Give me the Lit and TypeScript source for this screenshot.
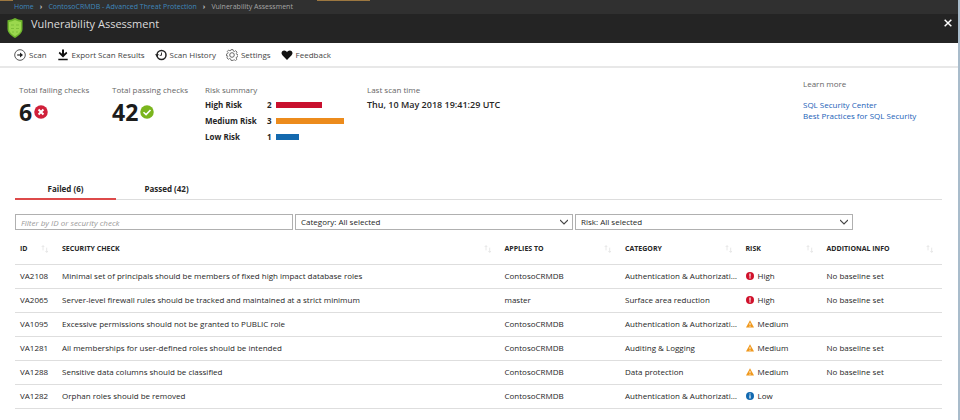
import { LitElement, html, svg, css } from "lit";
import { customElement, state } from "lit/decorators.js";

type Risk = "High" | "Medium" | "Low";

interface Check {
  id: string;
  title: string;
  target: string;
  category: string;
  risk: Risk;
  info: string;
}

const CHECKS: Check[] = [
  { id: "VA2108", title: "Minimal set of principals should be members of fixed high impact database roles", target: "ContosoCRMDB", category: "Authentication & Authorization", risk: "High", info: "No baseline set" },
  { id: "VA2065", title: "Server-level firewall rules should be tracked and maintained at a strict minimum", target: "master", category: "Surface area reduction", risk: "High", info: "No baseline set" },
  { id: "VA1095", title: "Excessive permissions should not be granted to PUBLIC role", target: "ContosoCRMDB", category: "Authentication & Authorization", risk: "Medium", info: "" },
  { id: "VA1281", title: "All memberships for user-defined roles should be intended", target: "ContosoCRMDB", category: "Auditing & Logging", risk: "Medium", info: "No baseline set" },
  { id: "VA1288", title: "Sensitive data columns should be classified", target: "ContosoCRMDB", category: "Data protection", risk: "Medium", info: "No baseline set" },
  { id: "VA1282", title: "Orphan roles should be removed", target: "ContosoCRMDB", category: "Authentication & Authorization", risk: "Low", info: "" },
];

const SUMMARY = [
  { name: "High Risk", count: 2, cls: "high" },
  { name: "Medium Risk", count: 3, cls: "medium" },
  { name: "Low Risk", count: 1, cls: "low" },
];

const COLUMNS = ["ID", "SECURITY CHECK", "APPLIES TO", "CATEGORY", "RISK", "ADDITIONAL INFO"];

const icon = (size: number, body: unknown) =>
  html`<svg width=${size} height=${size} viewBox="0 0 12 12" fill="none" aria-hidden="true">${body}</svg>`;

const scanIcon = icon(12, svg`<circle cx="6" cy="6" r="5.3" stroke="#444" stroke-width=".9"/><path d="M3.2 6h4" stroke="#222" stroke-width="1.2"/><path d="M6 3.600L9 6 6 8.400z" fill="#222"/>`);
const exportIcon = icon(12, svg`<path d="M5 .5h2v4.200l2.400-2 .9 1.500L6 8.600 1.700 4.200l.9-1.500 2.400 2z" fill="#111"/><path d="M1.300 10.500h9.400" stroke="#111" stroke-width="1.500"/>`);
const historyIcon = icon(12, svg`<circle cx="6.500" cy="6" r="4.500" stroke="#222" stroke-width="1.500"/><path d="M6.500 3.500v2.800h-1.800" stroke="#222" stroke-width=".9"/><path d="M0 5.200h4L2 8z" fill="#222"/>`);
const settingsIcon = icon(12, svg`<path d="M5 .6h2l.4 1.500 1 .4 1.300-.8 1.400 1.400-.8 1.300.4 1 1.300.3v1.800l-1.500.5-.4 1 .8 1.300-1.400 1.300-1.200-.8-1.100.4L7 11.400H5l-.4-1.500-1-.4-1.300.8-1.400-1.400.8-1.300-.4-1L.4 7V5l1.300-.4.4-1-.8-1.200 1.400-1.400 1.200.8 1-.4z" stroke="#555" stroke-width=".8"/><circle cx="6" cy="6" r="2.300" stroke="#555" stroke-width=".9"/>`);
const heartIcon = icon(12, svg`<path d="M6 11L1.400 6.300C-.5 4.200.8 1.400 3.200 1.400 4.600 1.400 5.500 2.200 6 3.200c.5-1 1.400-1.800 2.800-1.800 2.400 0 3.700 2.800 1.800 4.900z" fill="#111"/>`);
const failIcon = icon(14, svg`<circle cx="6" cy="6" r="5.800" fill="#d0203a"/><path d="M3.900 3.900l4.200 4.200M8.100 3.900L3.900 8.100" stroke="#fff" stroke-width="1.700"/>`);
const passIcon = icon(14, svg`<circle cx="6" cy="6" r="5.800" fill="#7ab51d"/><path d="M3 6.200l2.200 2L9 4.200" stroke="#fff" stroke-width="1.300"/>`);
const sortIcon = icon(8, svg`<path d="M3 8V1M1 3l2-2 2 2M8.500 4v7M6.500 9l2 2 2-2" stroke="#dcdcdc"/>`);
const closeIcon = icon(8, svg`<path d="M1 1l10 10M11 1L1 11" stroke="#fff" stroke-width="2.200"/>`);
const chevronIcon = icon(8, svg`<path d="M0 3l6 6 6-6" stroke="#444" stroke-width="1.600"/>`);

const RISK_ICONS: Record<Risk, unknown> = {
  High: icon(8, svg`<circle cx="6" cy="6" r="6" fill="#d0112b"/><path d="M6 2.300v4.700M6 8v1.800" stroke="#fff" stroke-width="1.800"/>`),
  Medium: icon(8, svg`<path d="M6 .4L12 11.400H0z" fill="#f0981c"/><path d="M6 4.300v3.500M6 8.800v1.400" stroke="#fff" stroke-width="1.300"/>`),
  Low: icon(8, svg`<circle cx="6" cy="6" r="6" fill="#1269b0"/><path d="M6 2.200v1.700M6 5v4.700" stroke="#fff" stroke-width="1.800"/>`),
};

const COMMANDS = [
  { label: "Scan", icon: scanIcon },
  { label: "Export Scan Results", icon: exportIcon },
  { label: "Scan History", icon: historyIcon },
  { label: "Settings", icon: settingsIcon },
  { label: "Feedback", icon: heartIcon },
];

@customElement("app-root")
export class AppRoot extends LitElement {
  @state() private tab = 0;

  static styles = css`
    :host { display: block; min-height: 100vh; box-sizing: border-box; border-right: 2px solid #a9bccb; background: #fff; color: #262626; font: 8px/12px "Open Sans", "Noto Sans", sans-serif; }
    * { box-sizing: border-box; }
    button, input, select { font: inherit; color: inherit; }
    button { background: none; border: 0; padding: 0; }
    svg { display: block; flex: none; }
    a { text-decoration: none; }
    .crumbs { display: flex; gap: 6px; height: 14px; padding: 1px 14px 0; color: #a5a5a5; font-size: 7px;
      background: linear-gradient(#9c7740, #9c7740) 0 0 / 13px 1px no-repeat, linear-gradient(#9c7740, #9c7740) 317px 0 / 53px 1px no-repeat, #303030; }
    .crumbs a { color: #3f87bb; }
    .sep { font-weight: 700; color: #c4c4c4; }
    .title { display: flex; align-items: flex-start; gap: 8px; height: 29px; padding: 3px 5px 0 7px; background: #242424; color: #dcdcdc; }
    .title h1 { flex: 1; margin: 0; font-size: 11px; line-height: 14px; font-weight: 400; }
    .close { padding: 2px 1px; }
    .commands { display: flex; gap: 10px; height: 25px; padding: 0 14px; align-items: center; border-bottom: 2px solid #e8e8e8; }
    .commands button { display: flex; align-items: center; gap: 3px; color: #444; }
    .overview { display: flex; padding: 15px 42px 0 19px; height: 112px; }
    .overview h2 { margin: 0; font-size: 8px; line-height: 14px; font-weight: 400; color: #666; }
    .stat { width: 93px; }
    .num { display: flex; align-items: center; gap: 2px; font-size: 23px; line-height: 30px; font-weight: 700; color: #1c1c1c; }
    .risks { width: 162px; }
    .riskline { display: grid; grid-template-columns: 62px 9px 1fr; line-height: 16px; align-items: center; font-weight: 700; }
    .bar { height: 6px; }
    .high { background: #c8102e; }
    .medium { background: #ec8b1c; }
    .low { background: #1469ae; }
    .time { flex: 1; }
    .time p { margin: 0; font-size: 9px; line-height: 16px; font-weight: 600; }
    .links { display: flex; flex-direction: column; width: 113px; line-height: 11px; white-space: nowrap; margin-top: -6px; }
    .links h2 { margin-bottom: 8px; }
    .links a { color: #1a62b8; }
    .main { padding: 0 16px 0 15px; }
    .tabs { display: flex; border-bottom: 1px solid #ddd; height: 20px; }
    .tabs button { width: 101px; height: 20px; border-bottom: 2px solid transparent; font-weight: 700; }
    .tabs button.on { border-color: #dd4a4a; }
    .filters { display: grid; grid-template-columns: repeat(3, 1fr); gap: 2px; padding: 14px 89px 0 0; }
    .field { position: relative; display: block; }
    .field input, .field select { display: block; width: 100%; height: 16px; border: 1px solid #b0b0b0; border-radius: 0; background: #fff; padding: 0 5px; appearance: none; outline: none; }
    .field svg { position: absolute; right: 5px; top: 4px; pointer-events: none; }
    input::placeholder { color: #999; font-style: italic; opacity: 1; }
    table { width: 100%; table-layout: fixed; border-collapse: collapse; }
    th, td { padding: 0 1px 0 5px; text-align: left; border-bottom: 1px solid #dedede; overflow: hidden; white-space: nowrap; text-overflow: ellipsis; }
    th { height: 34px; padding: 4px 8px 0 5px; font-size: 7px; font-weight: 700; }
    td { height: 24px; }
    th div { display: flex; justify-content: space-between; align-items: center; }
    .risk { display: flex; align-items: center; gap: 4px; }
    .c0 { width: 42px; }
    .c2, .c3, .c5 { width: 13%; }
    .c4 { width: 81px; }
  `;

  render() {
    return html`
      <nav class="crumbs" aria-label="Breadcrumb">
        <a href="#home">Home</a><span class="sep">›</span><a href="#db">ContosoCRMDB - Advanced Threat Protection</a><span class="sep">›</span><span>Vulnerability Assessment</span>
      </nav>
      <header class="title">
        <svg width="16" height="22" viewBox="0 0 16 22" aria-hidden="true">
          <path d="M8 1Q11 3 15.500 3.300V12c0 4-4 7-7.500 9C4.500 19 .5 16 .5 12V3.300Q5 3 8 1z" fill="#6eb52c"/>
          <path d="M8 3Q11 4.600 14 4.900V12c0 3-3 5.500-6 7.200C5 17.500 2 15 2 12V4.900Q5 4.600 8 3z" fill="#9bd84e"/>
          <path d="M4 8h3M9 8h3M4 11.500h3M9 11.500h3M5 15h2M9 15h2" stroke="#7fbf3a" stroke-width="1.200"/>
        </svg>
        <h1>Vulnerability Assessment</h1>
        <button class="close" aria-label="Close">${closeIcon}</button>
      </header>
      <div class="commands">${COMMANDS.map((c) => html`<button>${c.icon}${c.label}</button>`)}</div>
      <section class="overview">
        <div class="stat"><h2>Total failing checks</h2><div class="num">6${failIcon}</div></div>
        <div class="stat"><h2>Total passing checks</h2><div class="num">42${passIcon}</div></div>
        <div class="risks"><h2>Risk summary</h2>
          ${SUMMARY.map((s) => html`<div class="riskline"><span>${s.name}</span><span>${s.count}</span><div class="bar ${s.cls}" style="width:${s.count * 25}%"></div></div>`)}
        </div>
        <div class="time"><h2>Last scan time</h2><p>Thu, 10 May 2018 19:41:29 UTC</p></div>
        <div class="links"><h2>Learn more</h2><a href="#sql">SQL Security Center</a><a href="#best">Best Practices for SQL Security</a></div>
      </section>
      <main class="main">
        <div class="tabs" role="tablist">${["Failed (6)", "Passed (42)"].map((t, i) => html`<button role="tab" aria-selected=${this.tab === i} class=${this.tab === i ? "on" : ""} @click=${() => (this.tab = i)}>${t}</button>`)}</div>
        <div class="filters">
          <label class="field"><input aria-label="Filter by ID or security check" placeholder="Filter by ID or security check"></label>
          ${["Category: All selected", "Risk: All selected"].map((o) => html`<label class="field"><select aria-label=${o}><option>${o}</option></select>${chevronIcon}</label>`)}
        </div>
        <table>
          <thead><tr>${COLUMNS.map((c, i) => html`<th class="c${i}"><div>${c}${sortIcon}</div></th>`)}</tr></thead>
          <tbody>${CHECKS.map((c) => html`<tr><td>${c.id}</td><td>${c.title}</td><td>${c.target}</td><td>${c.category}</td><td><div class="risk">${RISK_ICONS[c.risk]}${c.risk}</div></td><td>${c.info}</td></tr>`)}</tbody>
        </table>
      </main>`;
  }
}
